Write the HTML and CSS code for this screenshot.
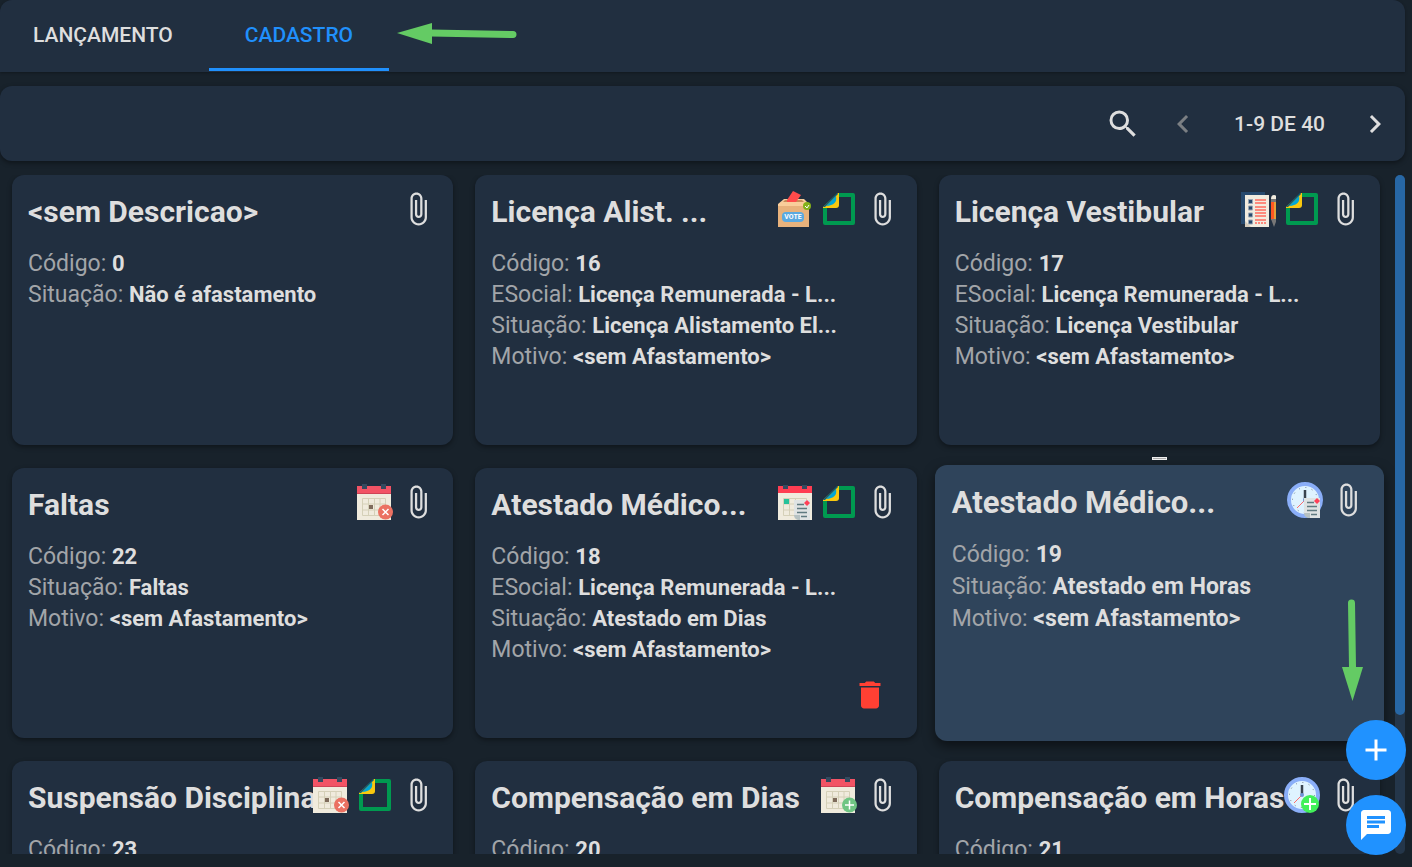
FILE: index.html
```html
<!DOCTYPE html>
<html lang="pt-BR">
<head>
  <meta charset="UTF-8">
  <meta name="viewport" content="width=device-width, initial-scale=1.0">
  <title>Cadastro de Afastamentos</title>
  <link rel="stylesheet" href="styles.css">
</head>
<body>
  <!-- icons -->
  <svg class="sprite" aria-hidden="true">
    <symbol id="clip" viewBox="0.700 0 24 24">
      <path fill="currentColor" d="M16.5 6v11.5c0 2.21-1.79 4-4 4s-4-1.79-4-4V5c0-1.38 1.12-2.5 2.5-2.5s2.5 1.12 2.5 2.5v10.5c0 .55-.45 1-1 1s-1-.45-1-1V6H10v9.5c0 1.38 1.12 2.5 2.5 2.5s2.5-1.12 2.5-2.5V5c0-2.21-1.79-4-4-4S7 2.79 7 5v12.5c0 3.04 2.46 5.5 5.5 5.5s5.5-2.46 5.5-5.5V6h-1.5z"/>
    </symbol>
    <symbol id="sheet" viewBox="0 0 36 36">
      <path fill="none" stroke="#009a50" stroke-width="4" stroke-linejoin="round" d="M17 4H32V32H4V17"/>
      <path fill="#f9c80e" d="M2 16L17 2H18V14Q18 17 15 17H2Z"/>
      <path fill="#00a6d6" d="M5 15L15 5Q17 14 5 15Z"/>
      <path fill="#0a5f78" d="M2 16L16 2L17 3L4 16Z"/>
    </symbol>
    <symbol id="exam" viewBox="0 0 36 36">
      <path fill="#27496d" d="M1 1H25V33H1Z"/>
      <path fill="#f1ebdf" d="M5 4H29V36H5Z"/>
      <path fill="#d6cdbd" d="M5 30L11 36H5Z"/>
      <path fill="#27496d" stroke="#9aa7b5" d="M8.500 8.500h4v4h-4zM8.500 15h4v4h-4zM8.500 22h4v4h-4zM8.500 29h4v4h-4z"/>
      <path stroke="#ff6b5e" stroke-width="1.400" d="M15 9H26M15 12H26M15 16H26M15 19H26M15 22H26M15 25H26M15 29H26"/>
      <path stroke="#ff6b5e" stroke-width="1.400" stroke-dasharray="2 1" d="M15 32H26"/>
      <path fill="#ff5722" d="M31 9H34V29H31Z"/>
      <path fill="#e2a13a" d="M34 9H37V29H34Z"/>
      <path fill="#777" d="M31 8H37V11H31ZM31 28H37L34 36Z"/>
      <path fill="#f1ebdf" d="M31 8Q31 4 34 4Q37 4 37 8Z"/>
    </symbol>
    <symbol id="calendar" viewBox="0 0 36 36">
      <path fill="#f0ebdd" d="M0 9H34V36H0Z"/>
      <path fill="#f25365" d="M0 2H34V9H0Z"/>
      <path fill="#cf4456" d="M0 9H34V10H0Z"/>
      <path fill="#34495e" d="M5 0H10V5H5ZM24 0H29V5H24Z"/>
      <path fill="none" stroke="#d5d0b8" d="M5.500 14.500H28.500V31.500H5.500ZM5 20H29M5 26H29M11.500 14V32M17.500 14V32M23 14V32"/>
      <path fill="#7e6b5b" d="M12 21H16V25H12Z"/>
    </symbol>
    <symbol id="calendar-x" viewBox="0 0 36 36">
      <use href="#calendar"/>
      <circle cx="28.500" cy="28" r="7.500" fill="#eb7162"/>
      <path stroke="#fff" stroke-width="1.500" d="M25.500 25L31.500 31M31.500 25L25.500 31"/>
    </symbol>
    <symbol id="calendar-plus" viewBox="0 0 36 36">
      <use href="#calendar"/>
      <circle cx="28.500" cy="28" r="7.500" fill="#6fc583"/>
      <path stroke="#fff" stroke-width="1.500" d="M24 28H33M28.500 23.500V32.500"/>
    </symbol>
    <symbol id="note" viewBox="0 0 18 20">
      <path fill="#dfe3e3" d="M0 0H16V20H4V15H0Z"/>
      <path fill="#b5c1c2" d="M0 15H6V20H4Q0 19 0 15Z"/>
      <path stroke="#5f7a80" stroke-width="1.300" d="M3 4.500H10M3 8.500H13M3 12.500H13M7 16.500H13"/>
      <path fill="#ff4058" d="M13 0L16 3L13 6L10 3Z"/>
    </symbol>
    <symbol id="calendar-note" viewBox="-1 0 36 36">
      <path fill="#f0ebdd" d="M0 8H34V36H0Z"/>
      <path fill="#ff3d52" d="M0 2H34V9H0Z"/>
      <path fill="#34495e" d="M5 1H10V5H5ZM24 1H29V5H24Z"/>
      <path fill="none" stroke="#d5d0b8" d="M5.500 14.500H28.500V31.500H5.500ZM5 20H29M5 26H29M11.500 14V32M17.500 14V32"/>
      <path fill="#26c29a" d="M6 15H11V20H6Z"/>
      <use href="#note" x="16" y="16" width="18" height="20"/>
    </symbol>
    <symbol id="clock" viewBox="0 0 36 36">
      <circle cx="18" cy="18" r="16" fill="#dff3ff" stroke="#8aaef8" stroke-width="4"/>
      <circle cx="18" cy="18" r="12.500" fill="none" stroke="#6f7c8c" stroke-dasharray="1 5.545"/>
      <path stroke="#ff6b6b" d="M18 18L10 26"/>
      <path stroke="#39434f" stroke-width="2.500" d="M18 8V18"/>
      <circle cx="18" cy="18" r="2" fill="#6f93d8"/>
    </symbol>
    <symbol id="clock-note" viewBox="0 0 36 36">
      <use href="#clock"/>
      <use href="#note" x="17" y="16" width="18" height="20"/>
    </symbol>
    <symbol id="clock-plus" viewBox="0 0 36 36">
      <use href="#clock"/>
      <circle cx="26" cy="27" r="9" fill="#42f05a"/>
      <path stroke="#fff" stroke-width="2" d="M20 27H32M26 21V33"/>
    </symbol>
  </svg>

  <nav class="tabs">
    <button class="tab">LANÇAMENTO</button>
    <button class="tab active">CADASTRO</button>
  </nav>

  <div class="toolbar">
    <button class="icon-btn search" aria-label="Pesquisar">
      <svg viewBox="0 0 24 24"><path fill="currentColor" d="M15.500 14h-.79l-.28-.27A6.471 6.471 0 0 0 16 9.500 6.500 6.500 0 1 0 9.500 16c1.610 0 3.090-.59 4.230-1.570l.27.28v.79l5 4.990L20.490 19l-4.990-5zm-6 0C7.010 14 5 11.990 5 9.500S7.010 5 9.500 5 14 7.010 14 9.500 11.990 14 9.500 14z"/></svg>
    </button>
    <button class="icon-btn" aria-label="Anterior" disabled>
      <svg viewBox="0 0 24 24"><path fill="currentColor" d="M15.410 7.410L14 6l-6 6 6 6 1.410-1.410L10.830 12z"/></svg>
    </button>
    <span class="range">1-9 DE 40</span>
    <button class="icon-btn" aria-label="Próxima">
      <svg viewBox="0 0 24 24"><path fill="currentColor" d="M10 6L8.590 7.410 13.170 12l-4.580 4.590L10 18l6-6z"/></svg>
    </button>
  </div>

  <main class="content">
    <div class="cards">
      <article class="card">
        <h2>&lt;sem Descricao&gt;</h2>
        <div class="icons"><svg><use href="#clip"/></svg></div>
        <p>Código: <b>0</b></p>
        <p>Situação: <b>Não é afastamento</b></p>
      </article>

      <article class="card">
        <h2>Licença Alist. ...</h2>
        <div class="icons">
          <svg viewBox="0 0 36 36">
            <path fill="#f9cd9a" d="M1 13L7 8H27L32 13Z"/>
            <path fill="#c98b57" d="M8 9H25L27 11H6Z"/>
            <path fill="#ff4b4b" d="M10 9L16 0L24 4L19 11H10Z"/>
            <path fill="#e8b27c" d="M1 13H32V36H1Z"/>
            <path fill="#f9cd9a" d="M1 13H32V15H1Z"/>
            <rect x="5" y="21" width="22" height="10" rx="4" fill="#5aa9e0"/>
            <text class="vote" x="16" y="28" text-anchor="middle">VOTE</text>
            <circle cx="30" cy="15" r="4" fill="#84b11a"/>
            <path fill="none" stroke="#fff" d="M28 15L30 17L32 14"/>
          </svg>
          <svg><use href="#sheet"/></svg>
          <svg><use href="#clip"/></svg>
        </div>
        <p>Código: <b>16</b></p>
        <p>ESocial: <b>Licença Remunerada - L...</b></p>
        <p>Situação: <b>Licença Alistamento El...</b></p>
        <p>Motivo: <b>&lt;sem Afastamento&gt;</b></p>
      </article>

      <article class="card">
        <h2>Licença Vestibular</h2>
        <div class="icons">
          <svg><use href="#exam"/></svg>
          <svg><use href="#sheet"/></svg>
          <svg><use href="#clip"/></svg>
        </div>
        <p>Código: <b>17</b></p>
        <p>ESocial: <b>Licença Remunerada - L...</b></p>
        <p>Situação: <b>Licença Vestibular</b></p>
        <p>Motivo: <b>&lt;sem Afastamento&gt;</b></p>
      </article>

      <article class="card">
        <h2>Faltas</h2>
        <div class="icons">
          <svg><use href="#calendar-x"/></svg>
          <svg><use href="#clip"/></svg>
        </div>
        <p>Código: <b>22</b></p>
        <p>Situação: <b>Faltas</b></p>
        <p>Motivo: <b>&lt;sem Afastamento&gt;</b></p>
      </article>

      <article class="card">
        <h2>Atestado Médico...</h2>
        <div class="icons">
          <svg><use href="#calendar-note"/></svg>
          <svg><use href="#sheet"/></svg>
          <svg><use href="#clip"/></svg>
        </div>
        <p>Código: <b>18</b></p>
        <p>ESocial: <b>Licença Remunerada - L...</b></p>
        <p>Situação: <b>Atestado em Dias</b></p>
        <p>Motivo: <b>&lt;sem Afastamento&gt;</b></p>
        <button class="icon-btn delete" aria-label="Excluir">
          <svg viewBox="0 0 24 24"><path fill="currentColor" d="M6 19c0 1.100.9 2 2 2h8c1.100 0 2-.9 2-2V7H6v12zM19 4h-3.500l-1-1h-5l-1 1H5v2h14V4z"/></svg>
        </button>
      </article>

      <article class="card selected">
        <span class="tip"></span>
        <h2>Atestado Médico...</h2>
        <div class="icons">
          <svg><use href="#clock-note"/></svg>
          <svg><use href="#clip"/></svg>
        </div>
        <p>Código: <b>19</b></p>
        <p>Situação: <b>Atestado em Horas</b></p>
        <p>Motivo: <b>&lt;sem Afastamento&gt;</b></p>
      </article>

      <article class="card">
        <h2>Suspensão Disciplina</h2>
        <div class="icons">
          <svg><use href="#calendar-x"/></svg>
          <svg><use href="#sheet"/></svg>
          <svg><use href="#clip"/></svg>
        </div>
        <p>Código: <b>23</b></p>
      </article>

      <article class="card">
        <h2>Compensação em Dias</h2>
        <div class="icons">
          <svg><use href="#calendar-plus"/></svg>
          <svg><use href="#clip"/></svg>
        </div>
        <p>Código: <b>20</b></p>
      </article>

      <article class="card">
        <h2>Compensação em Horas</h2>
        <div class="icons">
          <svg><use href="#clock-plus"/></svg>
          <svg><use href="#clip"/></svg>
        </div>
        <p>Código: <b>21</b></p>
      </article>
    </div>
    <div class="scrollbar"><div class="thumb"></div></div>
  </main>

  <div class="fabs">
    <button class="fab" aria-label="Adicionar">
      <svg viewBox="0 0 24 24"><path fill="currentColor" d="M19 13h-6v6h-2v-6H5v-2h6V5h2v6h6v2z"/></svg>
    </button>
    <button class="fab" aria-label="Mensagens">
      <svg viewBox="0 0 24 24"><path fill="currentColor" d="M20 2H4c-1.100 0-1.990.9-1.990 2L2 22l4-4h14c1.100 0 2-.9 2-2V4c0-1.100-.9-2-2-2zM6 9h12v2H6V9zm8 5H6v-2h8v2zm4-6H6V6h12v2z"/></svg>
    </button>
  </div>

  <!-- guide arrows -->
  <svg class="arrow arrow-tab" viewBox="0 0 120 24">
    <path stroke="#64cb64" stroke-width="7" stroke-linecap="round" d="M34 11L116 12.500"/>
    <path fill="#64cb64" d="M0 11L35 1V22Z"/>
  </svg>
  <svg class="arrow arrow-add" viewBox="0 0 24 104">
    <path stroke="#64cb64" stroke-width="7" stroke-linecap="round" d="M11.500 5L12.500 69"/>
    <path fill="#64cb64" d="M12.500 103L2 69H23Z"/>
  </svg>
</body>
</html>
```
FILE: styles.css
```css
* {
  box-sizing: border-box;
}
body {
  margin: 0;
  height: 100vh;
  display: flex;
  flex-direction: column;
  gap: 14px;
  padding: 0 7px 13px 0;
  overflow: hidden;
  position: relative;
  background-color: #18222b;
  color: #dedede;
  font-family: Roboto, sans-serif;
}
button {
  border: none;
  padding: 0;
  background: none;
  color: inherit;
  font-family: inherit;
  cursor: pointer;
}
.sprite {
  position: absolute;
  width: 0;
  height: 0;
}

/* tabs */
.tabs {
  display: flex;
  flex: none;
  height: 72px;
  padding-bottom: 1px;
  background-color: #212f40;
  border-radius: 12px 12px 0 0;
  box-shadow: 0 1px 3px rgba(0, 0, 0, 0.3);
}
.tab {
  padding: 0 36px;
  border-top: 1px solid transparent;
  border-bottom: 3px solid transparent;
  font-size: 21px;
  font-weight: 500;
}
.tab:first-child {
  padding-left: 33px;
}
.tab.active {
  color: #2090fc;
  border-bottom-color: #2090fc;
}

/* toolbar */
.toolbar {
  display: flex;
  flex: none;
  align-items: center;
  justify-content: flex-end;
  height: 75px;
  padding-right: 12px;
  background-color: #212f40;
  border-radius: 12px;
  box-shadow: 0 2px 5px rgba(0, 0, 0, 0.4);
}
.icon-btn {
  width: 36px;
  height: 36px;
}
.icon-btn svg {
  display: block;
  width: 36px;
  height: 36px;
}
.icon-btn:disabled {
  color: #7b7f83;
}
.search {
  margin-right: 24px;
}
.range {
  padding: 0 32px 0 33px;
  font-size: 21px;
  font-weight: 500;
}

/* cards */
.content {
  display: flex;
  flex: 1;
  min-height: 0;
}
.cards {
  flex: 1;
  display: grid;
  grid-template-columns: repeat(3, 1fr);
  grid-auto-rows: 270px;
  gap: 23px 22px;
  padding: 0 15px 0 12px;
  overflow: hidden;
}
.card {
  position: relative;
  min-width: 0;
  padding: 17px 16px;
  background-color: #212f40;
  border-radius: 12px;
  box-shadow: 0 2px 5px rgba(0, 0, 0, 0.4);
}
.card h2 {
  margin: 0 0 16px;
  font-size: 30px;
  font-weight: 700;
  line-height: 40px;
  white-space: nowrap;
}
.card p {
  margin: 0;
  font-size: 23px;
  line-height: 31px;
  color: #a2a5a9;
  white-space: nowrap;
}
.card b {
  color: #dedede;
  font-size: 22px;
}
.icons {
  position: absolute;
  top: 16px;
  right: 16px;
  display: flex;
  gap: 8px;
}
.icons svg {
  width: 36px;
  height: 36px;
  overflow: visible;
}
.vote {
  fill: #fff;
  font-size: 7px;
  font-weight: 700;
}
.delete {
  position: absolute;
  right: 29px;
  bottom: 25px;
  color: #ff4033;
}
/* the selected card is drawn a bit larger */
.card.selected {
  margin: -3px -4px;
  padding: 18px 17px;
  background-color: #2f445b;
  box-shadow: 0 5px 12px rgba(0, 0, 0, 0.5);
}
.card.selected h2 {
  font-size: 31px;
}
.card.selected p {
  line-height: 32px;
}
.card.selected b {
  font-size: 23px;
}
.card.selected .icons {
  top: 17px;
  right: 17px;
}
.tip {
  position: absolute;
  top: -8px;
  left: 50%;
  width: 15px;
  height: 3px;
  margin-left: -7px;
  border: 1px solid #eee;
  background-color: #aaa;
}
.scrollbar {
  width: 10px;
  background-color: #24364a;
  border-radius: 5px;
}
.thumb {
  height: 79.5%;
  background-color: #2767a5;
  border-radius: 5px;
}

/* floating buttons */
.fabs {
  position: absolute;
  right: 6px;
  bottom: 12px;
  display: grid;
  gap: 15px;
}
.fab {
  display: grid;
  place-items: center;
  width: 60px;
  height: 60px;
  border-radius: 50%;
  background-color: #2092ff;
  color: #fff;
}
.fab svg {
  width: 36px;
  height: 36px;
}

.arrow {
  position: absolute;
  fill: none;
}
.arrow-tab {
  top: 22px;
  left: 397px;
  width: 120px;
  height: 24px;
}
.arrow-add {
  right: 48px;
  bottom: 165px;
  width: 24px;
  height: 104px;
}
```
